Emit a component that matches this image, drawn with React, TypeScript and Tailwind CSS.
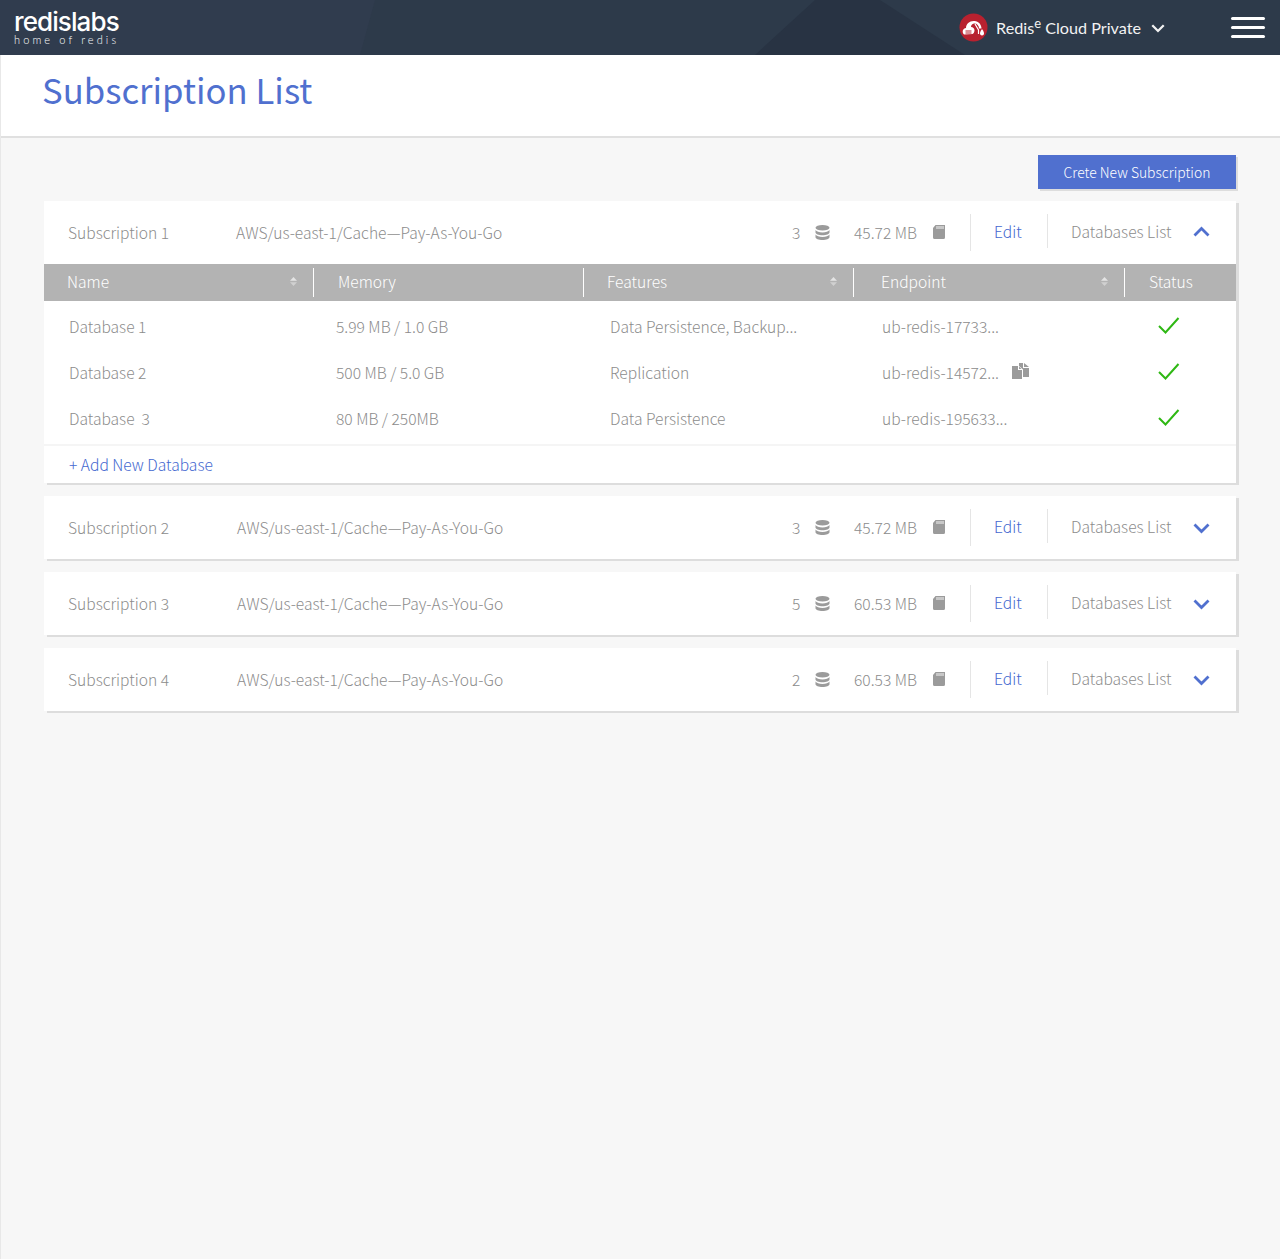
const subs = [
  { name: 'Subscription 1', count: 3, size: '45.72 MB', open: true },
  { name: 'Subscription 2', count: 3, size: '45.72 MB', open: false },
  { name: 'Subscription 3', count: 5, size: '60.53 MB', open: false },
  { name: 'Subscription 4', count: 2, size: '60.53 MB', open: false },
]

const rows = [
  { name: 'Database 1', memory: '5.99 MB / 1.0 GB', features: 'Data Persistence, Backup...', endpoint: 'ub-redis-17733...', copy: false },
  { name: 'Database 2', memory: '500 MB / 5.0 GB', features: 'Replication', endpoint: 'ub-redis-14572...', copy: true },
  { name: 'Database  3', memory: '80 MB / 250MB', features: 'Data Persistence', endpoint: 'ub-redis-195633...', copy: false },
]

function Sort() {
  return (
    <svg width="7" height="9" viewBox="0 0 7 9" className="absolute right-[16px] top-[9px]">
      <path d="M3.5 0 7 3.8H0z" fill="#e4e4e4" />
      <path d="M3.5 9 7 5.2H0z" fill="#d0d0d0" />
    </svg>
  )
}

function DbIcon() {
  return (
    <svg width="15" height="15" viewBox="0 0 15 15" fill="#9b9b9b">
      <ellipse cx="7.5" cy="2.8" rx="7" ry="2.8" />
      <path d="M.5 5c1 1.6 3.6 2.5 7 2.5s6-.9 7-2.5v2.6c0 1.5-3.1 2.7-7 2.7s-7-1.2-7-2.7z" />
      <path d="M.5 9.6c1 1.6 3.6 2.5 7 2.5s6-.9 7-2.5v2.6c0 1.5-3.1 2.8-7 2.8s-7-1.3-7-2.8z" />
    </svg>
  )
}

function CardIcon() {
  return (
    <svg width="12" height="14" viewBox="0 0 12 14">
      <path d="M2.5 0H12v12.5a1.5 1.5 0 0 1-1.5 1.5h-9A1.5 1.5 0 0 1 0 12.500V3z" fill="#9b9b9b" />
      <path d="M4 1v3M6 1v3M8 1v3M10 1v3" stroke="#fff" strokeWidth="0.9" />
    </svg>
  )
}

function CopyIcon() {
  return (
    <svg width="17" height="16" viewBox="0 0 17 16" fill="#9b9b9b">
      <path d="M0 3h6v4h4v9H0z" />
      <path d="M7 3.500 9.500 6H7z" />
      <path d="M7 0h4v5h6v9h-6V6.500L7 3z" />
      <path d="M12 0l5 4h-5z" />
    </svg>
  )
}

function Chevron({ up, className }: { up?: boolean, className?: string }) {
  return (
    <svg width="17" height="11" viewBox="0 0 17 11" fill="none" stroke="currentColor" strokeWidth="2.8" className={className}>
      <path d={up ? 'M1.500 9.500 8.500 2.500 15.500 9.500' : 'M1.500 1.500 8.500 8.500 15.500 1.500'} />
    </svg>
  )
}

function Logo() {
  return (
    <div className="w-[106px] font-['Inter',sans-serif] text-white">
      <div className="pt-[2px] text-[26px] leading-[22px] font-medium tracking-[-0.9px] whitespace-nowrap">redislabs</div>
      <div className="mt-[1px] text-[11px] leading-[12px] tracking-[3.1px] whitespace-nowrap font-['Lato',sans-serif]">home of redis</div>
    </div>
  )
}

function RedisMark() {
  return (
    <svg width="29" height="29" viewBox="0 0 29 29">
      <circle cx="14.500" cy="14.500" r="14" fill="#b8212f" />
      <path d="M5 21.500c-2.500-2.500-1-6.500 2-6.500 0-4.500 4-7.500 8.500-7 4 .3 7 3.500 7 7.500H20c0-3-2-5-4.500-5-2 0-3.500 1.500-3.500 3.500 2 0 3.500 1.500 3.500 3.500 0 1.500-1 3-2 3.500z" fill="#fff" />
      <path d="M6.500 18h6M6.500 20h6" stroke="#b8212f" strokeWidth="1" />
      <path d="M16 11l3.500 6v4" stroke="#fff" strokeWidth="1.200" fill="none" />
      <path d="M23 16c1.300 2 2 3.200 2 4.400a2 2 0 0 1-4 0c0-1.200.7-2.400 2-4.400z" fill="#fff" />
    </svg>
  )
}

function SubRow({ name, count, size, open, first }: { name: string, count: number, size: string, open: boolean, first: boolean }) {
  return (
    <div className="flex items-center h-[63px] text-[#8c8c8c]">
      <div className={first ? 'w-[168px] ml-[24px]' : 'w-[169px] ml-[24px]'}>{name}</div>
      <div className="flex-1">AWS/us-east-1/Cache—Pay-As-You-Go</div>
      <div className="w-[9px]">{count}</div>
      <div className="ml-[14px] mb-[1px]"><DbIcon /></div>
      <div className="ml-[24px] w-[64px] whitespace-nowrap">{size}</div>
      <div className="ml-[15px] mb-[1px]"><CardIcon /></div>
      <div className="ml-[25px] w-[1px] h-[37px] bg-[#e5e5e5]" />
      <a className="ml-[23px] w-[29px] text-[#4468d0] pb-[1px]">Edit</a>
      <div className="ml-[24px] w-[1px] h-[34px] mb-[3px] bg-[#e5e5e5]" />
      <div className="ml-[23px] w-[101px] pb-[1px] whitespace-nowrap">Databases List</div>
      <div className={open ? 'ml-[21px] mr-[26px] mb-[2px] text-[#5070cf]' : 'ml-[21px] mr-[26px] mt-[2px] text-[#5070cf]'}>
        <Chevron up={open} />
      </div>
    </div>
  )
}

function DbTable() {
  return (
    <div>
      <div className="flex h-[37px] bg-[#b3b3b3] text-white items-center">
        <div className="relative w-[270px] h-[29px] pl-[23px] border-r border-white leading-[26px]">Name<Sort /></div>
        <div className="w-[270px] h-[29px] pl-[24px] border-r border-white leading-[26px]">Memory</div>
        <div className="relative w-[270px] h-[29px] pl-[23px] border-r border-white leading-[26px]">Features<Sort /></div>
        <div className="relative w-[271px] h-[29px] pl-[27px] border-r border-white leading-[26px]">Endpoint<Sort /></div>
        <div className="pl-[24px] h-[29px] leading-[26px]">Status</div>
      </div>
      <div className="pt-[3px]">
        {rows.map((r) => (
          <div key={r.name} className="flex items-center h-[46px] text-[#8c8c8c] whitespace-pre">
            <div className="w-[267px] ml-[25px]">{r.name}</div>
            <div className="w-[274px]">{r.memory}</div>
            <div className="w-[272px]">{r.features}</div>
            <div className="w-[276px] flex items-center">
              {r.endpoint}
              {r.copy && <span className="ml-[13px] mb-[4px]"><CopyIcon /></span>}
            </div>
            <svg width="22" height="17" viewBox="0 0 22 17" fill="none" stroke="#2fb814" strokeWidth="2" className="mb-[4px]">
              <path d="M1 9l6.500 6.500L20.500 1" />
            </svg>
          </div>
        ))}
      </div>
      <div className="h-[2px] bg-[#f5f5f5] mt-[2px]" />
      <div className="h-[37px] pl-[25px] pt-[7px] text-[#4468d0]">+ Add New Database</div>
    </div>
  )
}

export default function App() {
  return (
    <div className="min-h-[1259px] bg-[#f7f7f7] border-l border-[#e8e8e8] font-['Noto_Sans_CJK_SC','Noto_Sans',sans-serif] font-light text-[15.6px]">
      <header className="relative overflow-hidden -ml-[1px] h-[55px] bg-[#303c4e] flex items-center pl-[14px] pr-[15px]">
        <svg className="absolute inset-0" width="1280" height="55" viewBox="0 0 1280 55">
          <path d="M360 55 375 0H1280V55z" fill="#2d3a4a" />
          <path d="M755 55 815 0H880L965 55z" fill="#283343" />
        </svg>
        <div className="relative flex-1"><Logo /></div>
        <div className="relative flex items-center text-[#f2f2f2] text-[16.2px] font-['Lato',sans-serif] font-normal">
          <RedisMark />
          <span className="ml-[8px] mt-[2px]">Redis<sup className="text-[13px] -top-[6px] relative align-baseline">e</sup> Cloud Private</span>
          <Chevron className="ml-[10px] mt-[2px] w-[14px] h-[9px]" />
        </div>
        <div className="relative ml-[66px] flex flex-col gap-[6px]">
          <div className="w-[34px] h-[3px] rounded-[2px] bg-white" />
          <div className="w-[34px] h-[3px] rounded-[2px] bg-white" />
          <div className="w-[34px] h-[3px] rounded-[2px] bg-white" />
        </div>
      </header>

      <div className="h-[83px] bg-white border-b-2 border-[#e0e0e0] pl-[41px] pt-[8px]">
        <h1 className="text-[34.7px] leading-[52px] font-normal text-[#5070cf]">Subscription List</h1>
      </div>

      <main className="pl-[43px] pr-[44px] pt-[17px]">
        <div className="flex justify-end">
          <button className="w-[198px] h-[34px] bg-[#5070cf] text-white text-[13.9px] shadow-[2px_2px_0_#ddd]">Crete New Subscription</button>
        </div>
        <div className="mt-[12px] flex flex-col gap-[13px]">
          {subs.map((s, i) => (
            <div key={s.name} className="bg-white shadow-[3px_2px_0_#ddd]">
              <SubRow name={s.name} count={s.count} size={s.size} open={s.open} first={i === 0} />
              {s.open && <DbTable />}
            </div>
          ))}
        </div>
      </main>
    </div>
  )
}
